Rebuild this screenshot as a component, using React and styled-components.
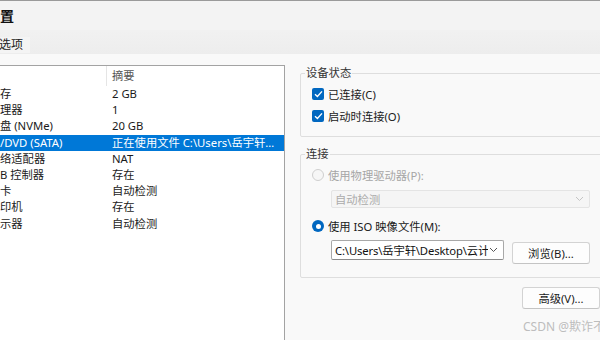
import React from 'react';
import styled, { createGlobalStyle } from 'styled-components';

const GlobalStyle = createGlobalStyle`
  html, body {
    margin: 0;
    padding: 0;
    background: #f9f9f9;
  }
  * {
    box-sizing: border-box;
  }
`

const Window = styled.div`
  position: relative;
  width: 600px;
  height: 340px;
  overflow: hidden;
  display: flex;
  flex-direction: column;
  background: #f9f9f9;
  color: #1a1a1a;
  font-family: "Noto Sans", "Noto Sans CJK SC", sans-serif;
  font-size: 11.3px;
`

const TitleBar = styled.div`
  height: 30px;
  flex-shrink: 0;
  border-top: 1px solid #9a9a9a;
  background: #f3f3f3;
  display: flex;
  align-items: center;
  padding-bottom: 2px;
  font-size: 14px;
  font-weight: 600;
  color: #111;
`

const TabStrip = styled.div`
  height: 24px;
  flex-shrink: 0;
  background: linear-gradient(#f1f1f1, #ededed);
  display: flex;
  align-items: flex-end;
  padding-bottom: 1px;
`

const Tab = styled.div`
  height: 16px;
  padding: 0 7px 0 0;
  background: #f4f4f4;
  line-height: 16px;
  font-size: 12px;
  color: #222;
  margin-left: -1px;
`

const Body = styled.div`
  flex: 1;
  display: flex;
  padding-top: 11px;
  min-height: 0;
`

const ListPanel = styled.div`
  width: 285px;
  flex-shrink: 0;
  background: #fff;
  border-top: 1px solid #a3a3a3;
  border-right: 1px solid #a3a3a3;
`

const ListHeader = styled.div`
  display: grid;
  grid-template-columns: 107px 1fr;
  height: 19px;
  margin-bottom: 1px;
  color: #555;
`

const HeaderCell = styled.div`
  line-height: 20px;
  padding-left: ${p => (p.$first ? '0' : '5px')};
  border-right: ${p => (p.$first ? '1px solid #e5e5e5' : 'none')};
`

const Row = styled.div`
  display: grid;
  grid-template-columns: 112px 1fr;
  height: 16.2px;
  line-height: 16.5px;
  background: ${p => (p.$selected ? '#0078d7' : 'transparent')};
  color: ${p => (p.$selected ? '#fff' : '#1a1a1a')};
`

const Cell = styled.div`
  white-space: nowrap;
  overflow: hidden;
  text-overflow: ellipsis;
  padding-right: 6px;
`

const RightPanel = styled.div`
  width: 302px;
  margin-left: 15px;
  display: flex;
  flex-direction: column;
  padding-top: 1px;
`

const Group = styled.fieldset`
  margin: ${p => p.$gap || 0}px -14px 0 0;
  padding: ${p => p.$topPad}px 0 ${p => p.$bottom}px 11px;
  border: 1px solid #dedede;
  border-radius: 2px;
  min-width: 0;
`

const Legend = styled.legend`
  margin-left: -7px;
  padding: 0 1px;
  line-height: 14px;
  color: #333;
`

const OptionRow = styled.div`
  height: 22px;
  display: flex;
  align-items: center;
  gap: 4px;
  margin-top: ${p => p.$top || 0}px;
  color: ${p => (p.$disabled ? '#a6a6a6' : '#1a1a1a')};
`

const CheckBox = styled.span`
  width: 12px;
  height: 12px;
  border-radius: 2px;
  background: #0067c0;
  display: flex;
  align-items: center;
  justify-content: center;
  flex-shrink: 0;
`

const Radio = styled.span`
  width: 12px;
  height: 12px;
  border-radius: 50%;
  flex-shrink: 0;
  display: flex;
  align-items: center;
  justify-content: center;
  background: ${p => (p.$checked ? '#0067c0' : '#f6f6f6')};
  border: ${p => (p.$checked ? 'none' : '1px solid #cfcfcf')};

  &::after {
    content: '';
    display: ${p => (p.$checked ? 'block' : 'none')};
    width: 5px;
    height: 5px;
    border-radius: 50%;
    background: #fff;
  }
`

const Select = styled.div`
  width: ${p => p.$width}px;
  height: ${p => p.$height}px;
  margin: ${p => p.$top || 0}px 0 0 19px;
  padding: 0 5px 0 3px;
  display: flex;
  align-items: center;
  justify-content: space-between;
  gap: 1px;
  background: ${p => (p.$disabled ? '#f5f5f5' : '#fff')};
  border: 1px solid ${p => (p.$disabled ? '#e4e4e4' : '#a8a8a8')};
  border-bottom-color: ${p => (p.$disabled ? '#e4e4e4' : '#8a8a8a')};
  border-radius: 2px;
  color: ${p => (p.$disabled ? '#ababab' : '#111')};
  white-space: nowrap;
  overflow: hidden;
`

const SelectText = styled.span`
  overflow: hidden;
  min-width: 0;
  letter-spacing: ${p => (p.$tight ? '-0.15px' : 'normal')};
`

const FileRow = styled.div`
  display: flex;
  align-items: flex-start;
  gap: 8px;
  margin-top: 3px;
`

const Button = styled.button`
  width: 78px;
  height: 22px;
  margin-top: ${p => p.$top || 0}px;
  padding: 0;
  border: 1px solid #d3d3d3;
  border-bottom-color: #c4c4c4;
  border-radius: 3px;
  background: #fdfdfd;
  font: inherit;
  color: #1a1a1a;
`

const ButtonRow = styled.div`
  display: flex;
  justify-content: flex-end;
  margin-top: 9px;
`

const Watermark = styled.div`
  position: absolute;
  left: 523px;
  top: 320px;
  white-space: nowrap;
  color: #bdbdbd;
  font-size: 12px;
  line-height: 14px;
`

const Chevron = ({ color }) => (
  <svg width="9" height="6" viewBox="0 0 9 6" style={{ flexShrink: 0 }}>
    <path d="M1 1 L4.5 4.5 L8 1" fill="none" stroke={color} strokeWidth="1" />
  </svg>
)

const Check = () => (
  <svg width="9" height="8" viewBox="0 0 9 8">
    <path d="M1 4.2 L3.4 6.4 L8 1.4" fill="none" stroke="#fff" strokeWidth="1.4" />
  </svg>
)

const devices = [
  ['存', '2 GB'],
  ['理器', '1'],
  ['盘 (NVMe)', '20 GB'],
  ['/DVD (SATA)', '正在使用文件 C:\\Users\\岳宇轩\\Desktop\\云计算\\CentOS.iso', true],
  ['络适配器', 'NAT'],
  ['B 控制器', '存在'],
  ['卡', '自动检测'],
  ['印机', '存在'],
  ['示器', '自动检测'],
]

export default function App() {
  return (
    <Window>
      <GlobalStyle />
      <TitleBar>置</TitleBar>
      <TabStrip>
        <Tab>选项</Tab>
      </TabStrip>
      <Body>
        <ListPanel>
          <ListHeader>
            <HeaderCell $first />
            <HeaderCell>摘要</HeaderCell>
          </ListHeader>
          {devices.map(([name, value, selected]) => (
            <Row key={name} $selected={selected}>
              <Cell>{name}</Cell>
              <Cell>{value}</Cell>
            </Row>
          ))}
        </ListPanel>
        <RightPanel>
          <Group $topPad={3} $bottom={9}>
            <Legend>设备状态</Legend>
            <OptionRow>
              <CheckBox><Check /></CheckBox>
              已连接(C)
            </OptionRow>
            <OptionRow>
              <CheckBox><Check /></CheckBox>
              启动时连接(O)
            </OptionRow>
          </Group>
          <Group $gap={10} $topPad={3} $bottom={13}>
            <Legend>连接</Legend>
            <OptionRow $disabled>
              <Radio />
              使用物理驱动器(P):
            </OptionRow>
            <Select $disabled $width={259} $height={18} $top={4}>
              <SelectText>自动检测</SelectText>
              <Chevron color="#c4c4c4" />
            </Select>
            <OptionRow $top={7}>
              <Radio $checked />
              使用 ISO 映像文件(M):
            </OptionRow>
            <FileRow>
              <Select $width={173} $height={20}>
                <SelectText $tight>C:\Users\岳宇轩\Desktop\云计</SelectText>
                <Chevron color="#555" />
              </Select>
              <Button $top={2}>浏览(B)...</Button>
            </FileRow>
          </Group>
          <ButtonRow>
            <Button>高级(V)...</Button>
          </ButtonRow>
        </RightPanel>
      </Body>
      <Watermark>CSDN @欺诈不了</Watermark>
    </Window>
  );
}
